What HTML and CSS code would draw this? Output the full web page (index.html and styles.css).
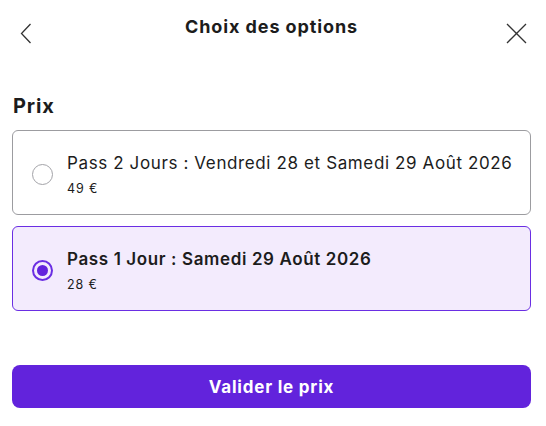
FILE: index.html
```html
<!DOCTYPE html>
<html lang="fr">
<head>
<meta charset="utf-8">
<title>Choix des options</title>
<link rel="stylesheet" href="styles.css">
</head>
<body>
<div class="sheet">
  <header class="sheet-header">
    <button class="icon-btn" aria-label="Retour">
      <svg width="12" height="21" viewBox="0 0 12 21"><path d="M10.5 1 L1.5 10.5 L10.5 20" fill="none" stroke="#333" stroke-width="1.3"/></svg>
    </button>
    <h1 class="sheet-title">Choix des options</h1>
    <button class="icon-btn" aria-label="Fermer">
      <svg width="21" height="21" viewBox="0 0 21 21"><path d="M1 1 L20 20 M20 1 L1 20" fill="none" stroke="#333" stroke-width="1.3"/></svg>
    </button>
  </header>

  <h2 class="section-title">Prix</h2>

  <div class="options">
    <label class="option">
      <span class="radio"></span>
      <span class="option-text">
        <span class="option-name">Pass 2 Jours : Vendredi 28 et Samedi 29 Août 2026</span>
        <span class="option-price">49 €</span>
      </span>
    </label>
    <label class="option selected">
      <span class="radio"></span>
      <span class="option-text">
        <span class="option-name">Pass 1 Jour : Samedi 29 Août 2026</span>
        <span class="option-price">28 €</span>
      </span>
    </label>
  </div>

  <button class="submit">Valider le prix</button>
</div>
</body>
</html>
```

FILE: styles.css
```css
* { box-sizing: border-box; }

body {
  margin: 0;
  background: #fff;
  font-family: Inter, "Noto Sans", sans-serif;
  color: #1c1c1c;
}

.sheet {
  padding: 0 15px 0 12px;
}

.sheet-header {
  display: flex;
  align-items: flex-start;
  justify-content: space-between;
  height: 92px;
}

.icon-btn {
  border: 0;
  background: none;
  padding: 0;
  margin-top: 23px;
  display: flex;
}
.icon-btn:first-child { margin-left: 8px; }
.icon-btn:last-child { margin-right: 4px; }

/* the back and close icons differ in width; nudge the title back to the centre */
.sheet-title {
  margin: 16px 0 0 5px;
  font-size: 18px;
  font-weight: 700;
  letter-spacing: 0.9px;
}

.section-title {
  margin: 0 0 10px 1px;
  font-size: 20px;
  font-weight: 700;
  line-height: 28px;
  letter-spacing: 0.9px;
}

.options {
  display: flex;
  flex-direction: column;
  gap: 11px;
}

.option {
  display: flex;
  align-items: center;
  gap: 14px;
  height: 85px;
  padding: 4px 0 0 19px;
  border: 1px solid #9c9ca0;
  border-radius: 6px;
}

.option.selected {
  border-color: #6a2ee3;
  background: #f3ebfd;
}

.radio {
  width: 21px;
  height: 21px;
  border-radius: 50%;
  border: 1.5px solid #a3a3a8;
  flex: none;
  display: flex;
  align-items: center;
  justify-content: center;
}

.selected .radio {
  border: 2px solid #6a2ee3;
}
.selected .radio::after {
  content: "";
  width: 11px;
  height: 11px;
  border-radius: 50%;
  background: #6323dd;
}

.option-text {
  display: flex;
  flex-direction: column;
  gap: 5px;
}

.option-name {
  font-size: 17px;
  line-height: 24px;
  letter-spacing: 0.62px;
}
.selected .option-name { font-weight: 600; }

.option-price {
  font-size: 12.5px;
  line-height: 18px;
  letter-spacing: 0.9px;
}

.submit {
  display: block;
  width: 100%;
  height: 43px;
  margin-top: 54px;
  border: 0;
  border-radius: 8px;
  background: #6223dc;
  color: #fff;
  font-family: inherit;
  font-size: 17px;
  font-weight: 700;
  letter-spacing: 0.8px;
}
```
